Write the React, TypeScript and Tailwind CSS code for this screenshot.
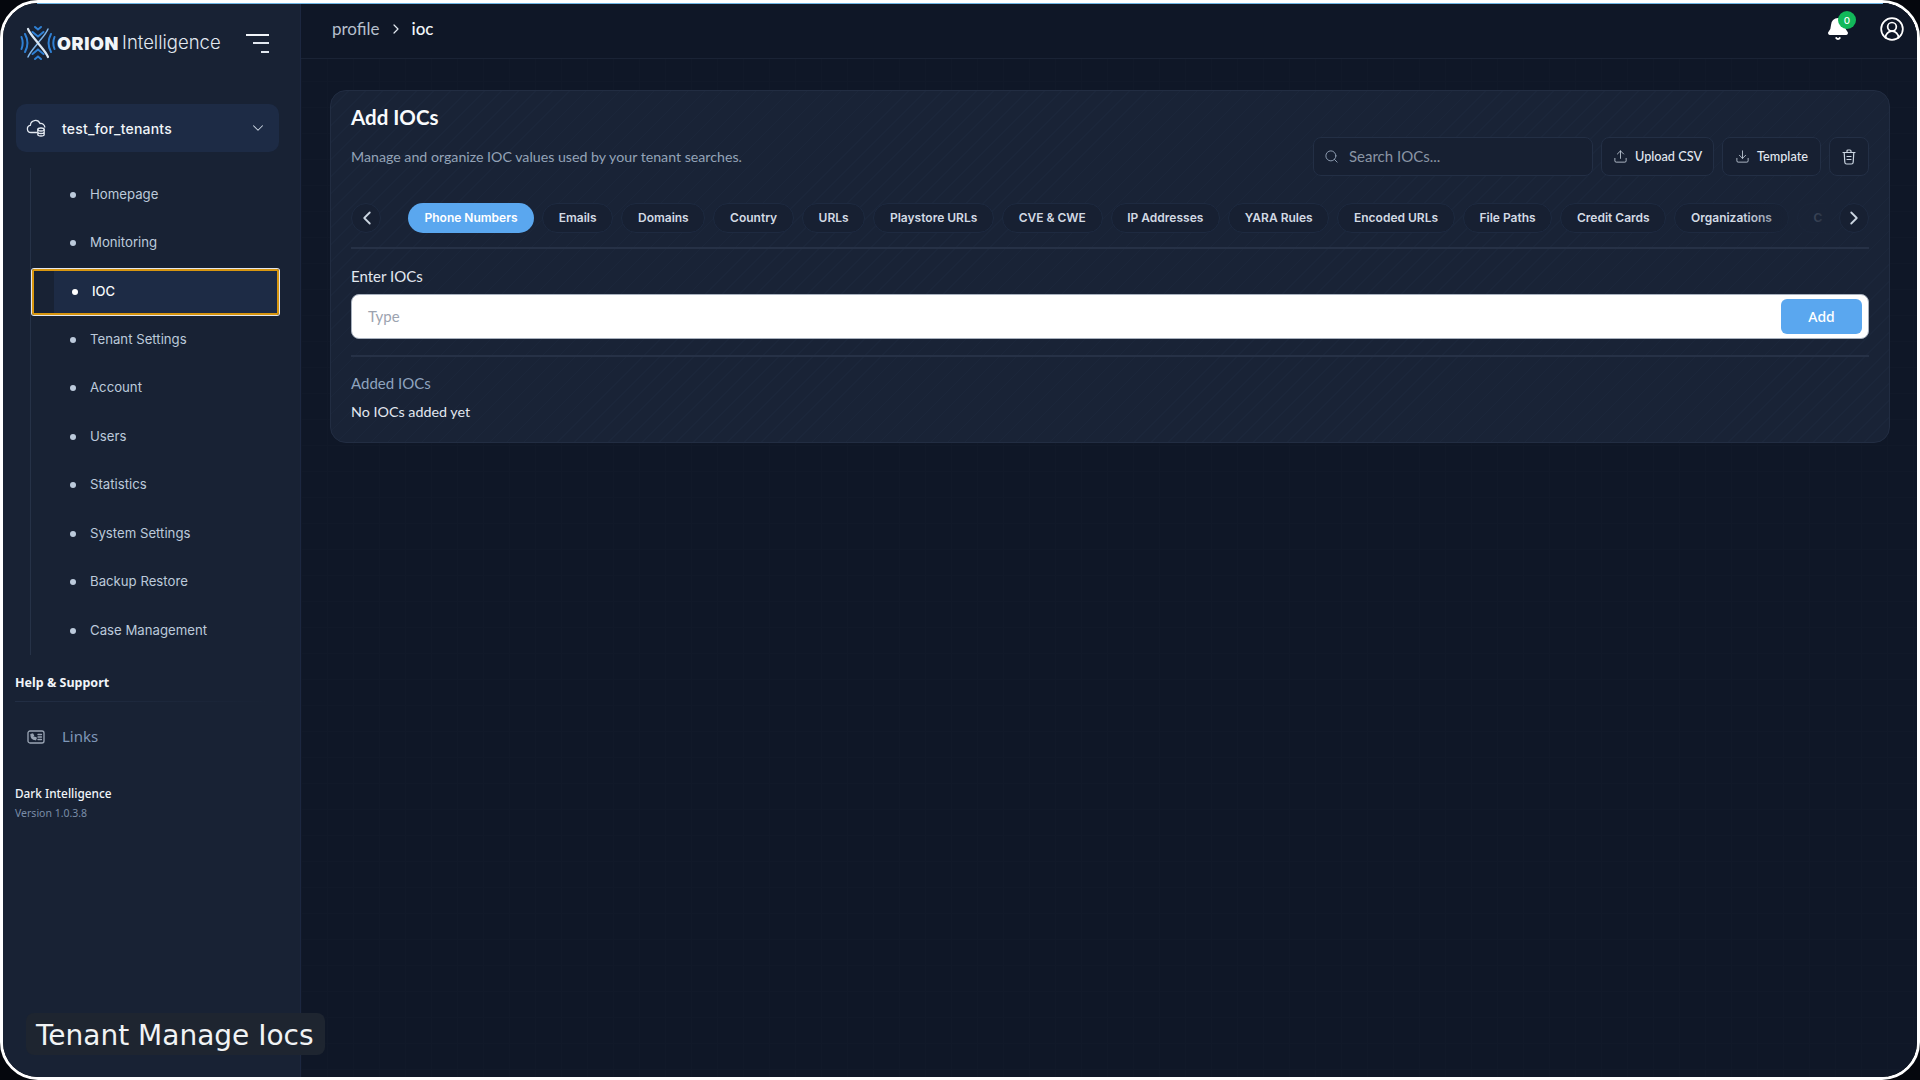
import { Bell, ChevronDown, ChevronLeft, ChevronRight, CircleUserRound, Download, Search, Upload } from "lucide-react";

const NAV = ["Homepage", "Monitoring", "IOC", "Tenant Settings", "Account", "Users", "Statistics", "System Settings", "Backup Restore", "Case Management"];

const TABS = ["Phone Numbers", "Emails", "Domains", "Country", "URLs", "Playstore URLs", "CVE & CWE", "IP Addresses", "YARA Rules", "Encoded URLs", "File Paths", "Credit Cards", "Organizations"];

function Logo() {
  return (
    <svg width="36" height="36" viewBox="0 0 36 36" fill="none" strokeLinecap="round">
      <g stroke="#2f80d4" strokeWidth="2">
        <path d="M1.500 12c1.600 4 1.600 8 0 12" />
        <path d="M5 9c3 5.500 3 12.500 0 18" />
        <path d="M34.500 12c-1.600 4-1.600 8 0 12" />
        <path d="M31 9c-3 5.500-3 12.500 0 18" />
        <path d="M12.500 7l5.500 4.500 5.500-4.500" />
        <path d="M12.500 29l5.500-4.500 5.500 4.500" />
        <path d="M15 2l3 2.500 3-2.500" />
        <path d="M15 34l3-2.500 3 2.500" />
      </g>
      <path d="M28 4c-2 5-6.500 9.500-10 14s-8 9-10 14" stroke="#7fb4e6" strokeWidth="1.500" />
      <path d="M8 4c2 5 6.500 9.500 10 14s8 9 10 14" stroke="#dbe7f3" strokeWidth="2.200" />
    </svg>
  );
}

function TenantIcon() {
  return (
    <svg width="22" height="20" viewBox="0 0 22 20" fill="none" stroke="#e2e8f0" strokeWidth="1.300" strokeLinecap="round" strokeLinejoin="round">
      <path d="M11 14.500H5a3.600 3.600 0 01-.6-7.150A5 5 0 0114 5.500a4 4 0 014.800 3.500" />
      <ellipse cx="15" cy="11.500" rx="3.200" ry="1.500" />
      <path d="M11.800 11.500v5c0 .9 1.400 1.500 3.200 1.500s3.200-.6 3.200-1.500v-5M11.800 14c0 .9 1.400 1.500 3.200 1.500s3.200-.6 3.200-1.500" />
    </svg>
  );
}

function LinksIcon() {
  return (
    <svg width="18" height="14" viewBox="0 0 18 14" fill="none" stroke="#9aa5b4" strokeWidth="1.300" strokeLinecap="round">
      <rect x="1" y="1" width="16" height="12" rx="2" />
      <path d="M4 4.500c0 3 1.800 5 4.500 5.200l.7-1.700-1.500-.8-.7.600c-.6-.4-1-1-1.200-1.700l.7-.6L5.700 4z" fill="#9aa5b4" />
      <path d="M11 4.500h3.500M11 7h3.500M11 9.500h3.500" />
    </svg>
  );
}

function TrashIcon() {
  return (
    <svg width="14" height="16" viewBox="0 0 14 16" fill="none" stroke="#cbd5e1" strokeWidth="1.200" strokeLinecap="round" strokeLinejoin="round">
      <path d="M1 3.500h12M5 3.500V2a1 1 0 011-1h2a1 1 0 011 1v1.500" />
      <path d="M2.200 3.500l.6 9.700A1.900 1.900 0 004.700 15h4.600a1.900 1.900 0 001.900-1.800l.6-9.700" />
      <path d="M5 7.500h4M5 10.500h4" />
    </svg>
  );
}

function Sidebar() {
  return (
    <aside className="flex w-[298px] shrink-0 flex-col border-r border-[#1c2740] bg-[#182234] font-['Inter',sans-serif]">
      <div className="flex h-[80px] shrink-0 items-center pl-[17px]">
        <Logo />
        <span className="ml-[1px] text-[18px] font-black tracking-[0.6px] text-[#f1f5f9]">ORION</span>
        <span className="ml-[3px] text-[18.500px] font-light text-[#e2e8f0]">Intelligence</span>
        <div className="ml-[25px] flex w-[23px] flex-col items-end gap-[6.500px]">
          <span className="h-[2px] w-[23px] bg-[#f1f5f9]" />
          <span className="h-[2px] w-[16px] bg-[#e2e8f0]" />
          <span className="h-[2px] w-[8px] bg-[#e2e8f0]" />
        </div>
      </div>
      <div className="mx-[13px] mt-[21px] flex h-[48px] w-[263px] shrink-0 items-center rounded-[10px] bg-[#1d2b45] pl-[10px] pr-[12px]">
        <TenantIcon />
        <span className="ml-[14px] flex-1 text-[14px] font-medium tracking-[0.2px] text-[#f1f5f9]">test_for_tenants</span>
        <ChevronDown size={18} strokeWidth={1.400} className="text-[#cbd5e1]" />
      </div>
      <nav className="ml-[27px] mt-[16px] flex w-[249px] shrink-0 flex-col border-l border-[#263247] pt-[2.500px]">
        {NAV.map((item) =>
          item === "IOC" ? (
            <div key={item} className="ml-[1px] flex h-[48px] items-center">
              <div className="h-[46px] w-full rounded-[2px] border-2 border-[#d8960f] pl-[20px] ring-1 ring-[#e5e7eb]">
                <div className="flex h-full items-center bg-[#1d2b45] pl-[18px]">
                  <span className="h-[6px] w-[6px] rounded-full bg-white" />
                  <span className="ml-[14px] text-[13px] font-medium text-[#f8fafc]">{item}</span>
                </div>
              </div>
            </div>
          ) : (
            <div key={item} className="flex h-[48.500px] items-center pl-[39px]">
              <span className="h-[6px] w-[6px] rounded-full bg-[#bccadb]" />
              <span className="ml-[14px] text-[13.200px] text-[#bccadb]">{item}</span>
            </div>
          ),
        )}
      </nav>
      <div className="ml-[12px] mt-[18.500px] font-['Noto_Sans',sans-serif]">
        <div className="text-[12.500px] font-bold leading-[18px] text-[#f1f5f9]">Help &amp; Support</div>
        <div className="mt-[9px] h-px w-[258px] bg-gradient-to-r from-[#222e44] to-transparent" />
        <div className="ml-[12px] mt-[27px] flex h-[16px] items-center">
          <LinksIcon />
          <span className="ml-[17px] text-[15px] text-[#7f97b8]">Links</span>
        </div>
        <div className="mt-[39px] text-[11.800px] font-medium leading-[18px] text-[#f1f5f9]">Dark Intelligence</div>
        <div className="mt-[4px] text-[10.500px] leading-[14px] text-[#7a8da8]">Version 1.0.3.8</div>
      </div>
    </aside>
  );
}

function CardHeader() {
  return (
    <div className="flex items-end justify-between">
      <div className="pb-[9px]">
        <h1 className="text-[20.500px] font-bold leading-[27px] text-[#f8fafc]">Add IOCs</h1>
        <p className="mt-[16px] text-[14.200px] leading-[20px] text-[#94a3b8]">Manage and organize IOC values used by your tenant searches.</p>
      </div>
      <div className="flex h-[39px] items-stretch gap-[8px]">
        <div className="flex w-[280px] items-center rounded-[8px] border border-[#232f45] bg-[#172032] pl-[10px]">
          <Search size={15} strokeWidth={1.500} className="text-[#94a3b8]" />
          <span className="ml-[10px] text-[15px] text-[#8a95a5]">Search IOCs...</span>
        </div>
        <div className="flex w-[113px] items-center justify-center gap-[7px] rounded-[8px] border border-[#232f45] bg-[#172032] text-[12.700px] font-medium text-[#e2e8f0]">
          <Upload size={15} strokeWidth={1.300} className="text-[#cbd5e1]" />
          Upload CSV
        </div>
        <div className="flex w-[99px] items-center justify-center gap-[7px] rounded-[8px] border border-[#232f45] bg-[#172032] text-[12.700px] font-medium text-[#e2e8f0]">
          <Download size={15} strokeWidth={1.300} className="text-[#cbd5e1]" />
          Template
        </div>
        <div className="flex w-[40px] items-center justify-center rounded-[8px] border border-[#232f45] bg-[#172032]">
          <TrashIcon />
        </div>
      </div>
    </div>
  );
}

function Tabs() {
  return (
    <div className="mt-[27px] flex h-[30px] items-center">
      <button className="flex h-[30px] w-[30px] shrink-0 items-center justify-center rounded-full border border-[#1e2a40] bg-[#172032] pl-[1px]">
        <ChevronLeft size={22} strokeWidth={2} className="text-[#cbd5e1]" />
      </button>
      <div className="relative ml-[27px] flex h-[30px] min-w-0 flex-1 gap-[8px] overflow-hidden font-['Inter',sans-serif]">
        {TABS.map((tab) => (
          <span
            key={tab}
            className={
              tab === "Phone Numbers"
                ? "flex shrink-0 items-center rounded-full bg-[#5aa7ef] px-[16.500px] text-[12px] font-semibold text-white"
                : "flex shrink-0 items-center rounded-full border border-[#1e2a40] bg-[#172032] px-[15.700px] text-[12px] font-semibold text-[#d3dae4]"
            }
          >
            {tab}
          </span>
        ))}
        <span className="flex w-[40px] shrink-0 items-center rounded-l-full border border-[#1e2a40] pl-[16px] text-[12px] font-semibold text-[#d3dae4]">C</span>
        <div className="absolute inset-y-0 right-0 w-[90px] bg-gradient-to-r from-transparent to-[#192336]" />
      </div>
      <button className="ml-[8px] flex h-[30px] w-[30px] shrink-0 items-center justify-center rounded-full border border-[#1e2a40] bg-[#172032]">
        <ChevronRight size={22} strokeWidth={2} className="text-[#cbd5e1]" />
      </button>
    </div>
  );
}

export default function App() {
  return (
    <div className="h-screen w-full overflow-hidden bg-[#05070d]">
      <div className="relative flex h-full overflow-hidden rounded-[38px] border-[3px] border-white">
        <div className="absolute left-[34px] right-[34px] top-[-3px] z-10 h-[4px] border-b border-[#6fb6e6] bg-[#05070d]" />
        <Sidebar />
        <main className="min-w-0 flex-1 bg-[#0f1727] bg-[linear-gradient(#111929_1px,transparent_1px),linear-gradient(90deg,#111929_1px,transparent_1px)] bg-[size:26px_26px] font-['Lato',sans-serif]">
          <header className="flex h-[56px] items-center border-b border-[#1a2335] bg-[#0f1727] pb-[3px] pl-[31px] pr-[12px]">
            <span className="text-[17px] text-[#b6bfcc]">profile</span>
            <ChevronRight size={16} strokeWidth={1.800} className="mx-[8px] text-[#e2e8f0]" />
            <span className="text-[17px] font-medium text-[#f1f5f9]">ioc</span>
            <div className="ml-auto flex items-center gap-[29px]">
              <div className="relative">
                <Bell size={24} fill="white" stroke="white" />
                <span className="absolute right-[-6px] top-[-6px] flex h-[18px] w-[18px] items-center justify-center rounded-full bg-[#12b85a] text-[10px] font-semibold text-white">0</span>
              </div>
              <CircleUserRound size={26} strokeWidth={1.600} className="mb-[1px] text-white" />
            </div>
          </header>
          <div className="pl-[29px] pr-[27px] pt-[31px]">
            <section className="rounded-[16px] border border-[#222d42] bg-[#192336] bg-[repeating-linear-gradient(135deg,#1b263a_0,#1b263a_1px,#192336_1px,#192336_12px)] px-[20px] pb-[20px] pt-[13px]">
              <CardHeader />
              <Tabs />
              <div className="mt-[14px] h-[2px] bg-[#263146]" />
              <label className="mt-[17px] block text-[15px] leading-[20px] text-[#e2e8f0]">Enter IOCs</label>
              <div className="mt-[8px] flex h-[45px] items-center rounded-[8px] border border-[#a7b0bd] bg-white pl-[16px] pr-[6px]">
                <span className="flex-1 text-[15px] text-[#9ca3af]">Type</span>
                <button className="h-[35px] w-[81px] rounded-[6px] bg-[#5aa7ef] font-['Noto_Sans',sans-serif] text-[14px] font-medium text-white">Add</button>
              </div>
              <div className="mt-[16px] h-[2px] bg-[#263146]" />
              <h2 className="mt-[16px] text-[15px] leading-[20px] text-[#8fa3bf]">Added IOCs</h2>
              <p className="mt-[9px] text-[14.300px] leading-[20px] text-[#e2e8f0]">No IOCs added yet</p>
            </section>
          </div>
        </main>
        <div className="absolute bottom-[22px] left-[23px] z-20 flex h-[42px] w-[299px] items-center rounded-[8px] bg-[#1e2530] pl-[10px] pt-[3px] font-['DejaVu_Sans',sans-serif] text-[28px] text-[#f1f3f5]">Tenant Manage Iocs</div>
      </div>
    </div>
  );
}
